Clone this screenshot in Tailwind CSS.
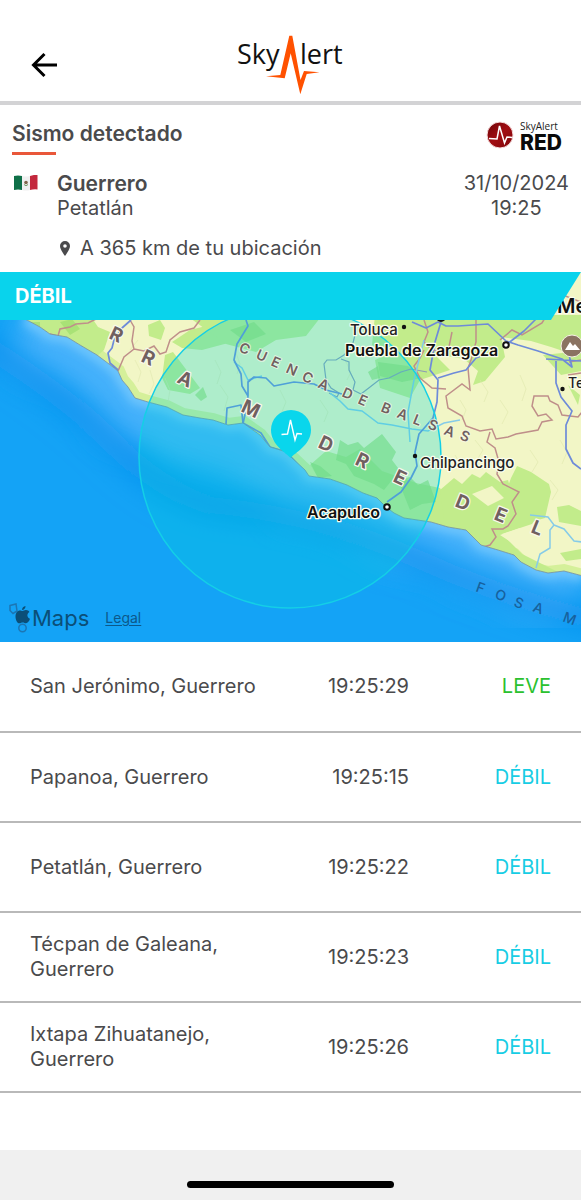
<!DOCTYPE html>
<html lang="es">
<head>
    <meta charset="UTF-8">
    <meta name="viewport" content="width=device-width, initial-scale=1.0">
    <title>SkyAlert - Sismo detectado</title>
    <script src="https://cdn.jsdelivr.net/npm/@tailwindcss/browser@4"></script>
</head>
<body class="min-h-screen flex flex-col bg-white text-[#4a4a4c] text-xl leading-[25px] font-['Inter',sans-serif]">

    <!-- Barra superior -->
    <header class="grid grid-cols-[1fr_auto_1fr] items-center h-[105px] pt-7 px-7 border-b-4 border-[#d3d3d5]">
        <button type="button" aria-label="Regresar" class="w-8 h-8 flex items-center justify-center text-black">
            <svg class="w-8 h-8" viewBox="0 0 32 32" fill="none" stroke="currentColor" stroke-width="3">
                <path d="M16.5 5 5.5 16 16.5 27M5.5 16H29"/>
            </svg>
        </button>
        <svg class="w-[110px] h-[62px]" viewBox="235 34 110 62" role="img" aria-label="SkyAlert">
            <g class="font-['Open_Sans',sans-serif] text-[27px]" fill="#111">
                <text x="236" y="64">Sky</text>
                <text x="299" y="64">lert</text>
            </g>
            <path fill="#ff5100" d="M288.300 35.700h3L299.500 80 303 71l15.500 1.300L305.700 74 299.300 94.300 289.700 53.300 283.700 78.300 265 76.300 279.300 75Z"/>
        </svg>
    </header>

    <!-- Resumen del sismo -->
    <section class="pt-4 pb-[11px] px-3">
        <div class="flex justify-between h-9">
            <div>
                <h1 class="text-[21px] font-semibold">Sismo detectado</h1>
                <div class="w-11 h-[3px] mt-[6px] bg-[#e9573a]"></div>
            </div>
            <svg class="w-[84px] h-9" viewBox="484 120 84 36" role="img" aria-label="SkyAlert RED">
                <defs>
                    <linearGradient id="redBadge" x1="0" y1="0" x2="1" y2="1">
                        <stop offset="0" stop-color="#6d0408"/>
                        <stop offset=".5" stop-color="#a10d12"/>
                        <stop offset="1" stop-color="#7d060a"/>
                    </linearGradient>
                </defs>
                <circle cx="499" cy="134" r="13" fill="url(#redBadge)" stroke="#f5dcdc"/>
                <path d="M488 137.500l8 .5 2.500-13 5 17 2.500-6 5 .5" fill="none" stroke="#fff" stroke-width="1.500"/>
                <text x="519" y="129" font-size="10" fill="#222" class="font-['Open_Sans',sans-serif]">SkyAlert</text>
                <text x="519" y="149" font-size="21" font-weight="800" fill="#0a0a0a">RED</text>
            </svg>
        </div>
        <div class="flex mt-[14px]">
            <svg class="w-6 h-4 mt-1 mr-5 ml-[2px]" viewBox="0 0 24 16" role="img" aria-label="México">
                <path d="M0 1q4-1 8 0v14q-4-1-8 0Z" fill="#0f7048"/>
                <path d="M8 1q4 1 8 0v14q-4 1-8 0Z" fill="#f0f0f0"/>
                <path d="M16 1q4-1.500 7.500-1v14.500q-3.500-.5-7.500.5Z" fill="#c3283d"/>
                <path d="M10 9.500q2 2.500 4 0" fill="none" stroke="#6f9a63"/>
                <circle cx="12" cy="7.500" r="1.800" fill="#80644a"/>
            </svg>
            <div class="flex-1 -ml-[1px]">
                <p class="text-[21px] font-semibold">Guerrero</p>
                <p>Petatlán</p>
            </div>
            <div class="text-center">
                <p>31/10/2024</p>
                <p>19:25</p>
            </div>
        </div>
        <div class="flex items-center mt-[15px] pl-12 gap-[10px]">
            <svg class="w-[10px] h-[15px]" viewBox="0 0 10 15" fill="#4a4a4c">
                <path fill-rule="evenodd" d="M5 0a5 5 0 0 0-5 5c0 3.500 5 10 5 10s5-6.500 5-10a5 5 0 0 0-5-5Zm0 3.200a1.800 1.800 0 1 1 0 3.600 1.800 1.800 0 0 1 0-3.600Z"/>
            </svg>
            <p>A 365 km de tu ubicación</p>
        </div>
    </section>

    <!-- Mapa con intensidad -->
    <section class="relative h-[370px] overflow-hidden">
        <svg class="w-full h-full" viewBox="0 272 581 370" preserveAspectRatio="xMidYMid slice">
            <defs>
                <filter id="soft" x="-20%" y="-20%" width="140%" height="140%"><feGaussianBlur stdDeviation="14"/></filter>
                <filter id="shore" x="-20%" y="-20%" width="140%" height="140%"><feGaussianBlur stdDeviation="5"/></filter>
                <path id="coast" d="M25 319 40 327 50 334 67 337 80 345 97 355 113 367 118 371 122 380 128 387 135 398 148 402 167 407 183 415 200 418 213 420 228 425 243 423 260 435 270 447 287 452 292 458 305 470 309 476 330 479 347 485 363 493 377 498 386 507 394 513 404 518 431 522 448 527 466 530 481 545 498 550 514 555 521 562 536 570 548 573 564 571 583 576"/>
                <clipPath id="land"><path d="M25 319 40 327 50 334 67 337 80 345 97 355 113 367 118 371 122 380 128 387 135 398 148 402 167 407 183 415 200 418 213 420 228 425 243 423 260 435 270 447 287 452 292 458 305 470 309 476 330 479 347 485 363 493 377 498 386 507 394 513 404 518 431 522 448 527 466 530 481 545 498 550 514 555 521 562 536 570 548 573 564 571 583 576V270H0V319Z"/></clipPath>
            </defs>

            <!-- océano -->
            <rect y="272" width="581" height="370" fill="#14a3f6"/>
            <use href="#coast" fill="none" stroke="#45b1fb" stroke-width="95" filter="url(#soft)"/>
            <path d="M-40 330Q60 390 110 440T210 505Q320 515 420 560T620 625" fill="none" stroke="#0a92ee" stroke-width="22" filter="url(#soft)"/>
            <use href="#coast" fill="none" stroke="#6fc6fd" stroke-width="12" filter="url(#shore)"/>

            <!-- tierra -->
            <g clip-path="url(#land)">
                <rect y="272" width="581" height="310" fill="#f2f6c6"/>
                <use href="#coast" fill="none" stroke="#d5f09a" stroke-width="14"/>
                <g fill="#c2ec8b">
                    <path d="M20 315h70l8 12 12 5-6 18-9 8-30-20-24-8Z"/>
                    <path d="M148 325l12-5 5 8-4 12-12-4ZM172 342l18-12 32-8 10 20-30 8-20-2ZM165 355l8-3 12 16 15 20-10 6-22-4-6-12Z"/>
                    <path d="M190 318h130l-14 18-30 4-20 12-30-8Z"/>
                    <path d="M375 315h206v42l-30-10-20-6-30-4 4 20-20 24-12 4 5-14-14-12-24-4-28 10-40-20Z"/>
                    <path d="M375 360l45-20 30 30-30 10-10 18-30-10Z"/>
                    <path d="M310 465l16-14 20 6 14-8 22 22 34 12 24 5 10 18 40 14 20 26-54-8-80-20-48-25Z"/>
                    <path d="M440 490l14-12 8 6 10-10 8 4 6-6 14 10 8-2 4 14 10 10 20 6-10 14-30 10 20 20 40 20-24 2-44-22-50-34Z"/>
                    <path d="M511 478l6-12 14 6 18 12 2 8-6 26-14 4-8-8-12 4-8-18ZM557 507l12-2 12 6v15l-22-4ZM560 553l21-4v10l-15 2ZM568 385l12 10-2 10Z"/>
                    <path d="M543 355l38-4v20l-20 4Z"/>
                </g>
                <path d="M472 494l20-8 12 12-16 8ZM500 535l20-7 24 8-8 14-22-6Z" fill="#f2f6c6"/>
                <g fill="#9bdd6c" opacity=".65">
                    <path d="M340 440l8 5 10-3 6 6 18-14 14 18-4 8 12 16-12 4-8 10-10-6-20-8-8-12-10-4ZM310 462l10 4 12 10-14 2ZM378 362l30 4 14 12-20 4-22-6ZM398 480l12-3 8 8 10-5 8 22-14 2-12 6Z"/>
                    <path d="M195 395l8-8 4 10-6 4ZM368 372l10-6 2 12-8 2ZM230 330l24-8 12 12-20 8ZM60 322l12-3 8 10-10 6ZM20 322h20v8Z"/>
                </g>
                <!-- relieve -->
                <g fill="none" stroke="#dfe7ad" stroke-width="1" opacity=".6">
                    <path d="M135 360l6 12-3 10M150 370l4 14-5 10M165 378l5 12-2 12M130 350l8-10M215 360l6 12-4 12M235 350l5 14-3 10M220 385l8 12-4 14M280 390l6 12-5 12M320 400l8 12-4 10M345 360l6 12-4 8"/>
                    <path d="M460 400l6 10-4 10M480 380l8 12-4 10M500 400l8 12-6 12M520 375l6 14-4 12M475 440l8 10-6 10M560 440l7 12-5 12M530 450l8 12-6 10M550 480l8 10-6 10M455 455l6 10"/>
                </g>
                <!-- límites estatales -->
                <g fill="none" stroke="#bf8f8a" stroke-width="1.500">
                    <path d="M50 334l8 2 2-7 10-2 6-3 12-1 8-4M130 320l4 7-2 14 2 8-10 8-6 14M134 349l10 2 10-5 6 8 6-2 4-12 10-8 14-4 6-8"/>
                    <path d="M424 320l4 12-4 10 8 8 16 2 4-20M476 320l0 22-5 18-3 8 2 22-8-6-16 12 2 12 14 8 4 10 14 5 12-2 4 10 12-2 8-3 22-4 4-8 10-2-6-6-8 2-6-10 2-10 14 0 2 5 8 4 4 10 16 2 8-10 14-2M500 340l12-10 10 5 20-12 6-10M569 362l12-2M568 375l13-2"/>
                    <path d="M490 432l-3 10 8 6 4 14-2 12 6 10 16 8-7 10 4 12-8 12-5 3-11 0 4 8-6 8-10 3"/>
                    <path d="M424 350l-4 8-6 8 6 12 12 10 14 1M559 272l-4 20 26 10"/>
                </g>
                <g fill="none" stroke="#8c9bb4" stroke-width="1.200">
                    <path d="M355 335l-3 12-8 8-8 5-9 0-3 4 2 16 5 8 8 5-2 4-8-4M341 359l8 3 0 8 6 12-2 8 8 4 18-14 10-2 12-6 10-3 16 3"/>
                </g>
                <!-- ríos y carreteras -->
                <g fill="none" stroke="#86cbe8" stroke-width="1.500">
                    <path d="M234 362l8 6 6 12 14-4M330 393l10 8 8 8 14 2 16 12 14 2 20 4 16 2 16-8 16-3M424 340l-10 40-6 32 2 30M536 568l4-14 10-6 0-18 4-5-6-8-18-2M554 525l10 4 10 12 8 1"/>
                </g>
                <g fill="none" stroke="#6e8bd9" stroke-width="1.700" stroke-linejoin="round">
                    <path d="M131 320l-9 8-8 12-2 8-4 5 2 10 8 7"/>
                    <path d="M246 320l2 6-11 18-3 16 7 14 1 12 6 10-2 14-4 18M248 396l0-14 6-5 12 1 8 8 20-4 20 2 12 6 16 4"/>
                    <path d="M226 424l1-16 14-3 2 18M243 423l18 10 9 14 17 5 5 6 14 15"/>
                    <path d="M412 322l14 6 12-6 8 4 12 0 30-2 18 17 12 4 20 6 24 8 10 8-4-16M546 359l35 2M556 361l0 22 5 14 11 14-6 14 0 24 7 14 8 6M506 345l18-14 16-16"/>
                    <path d="M441 322l-6 20-5 28 8 10-1 22-4 16-14 16-4 18 2 14-6 12-10 14-14 10M438 378l16-5 12-3 10-12 10-4"/>
                </g>
            </g>
            <use href="#coast" fill="none" stroke="#6c8ba5" stroke-width=".8"/>

            <!-- radio del sismo -->
            <circle cx="290" cy="457" r="151" fill="#00d8d8" fill-opacity=".28" stroke="#14cfe6" stroke-width="1.500"/>

            <!-- nombres de relieve -->
            <g class="font-bold" font-size="19" fill="#706060" stroke="#f8f8ec" stroke-width="2.500" paint-order="stroke" stroke-linejoin="round">
                <text rotate="25" x="108 140 176" y="338 361 382">RRA</text>
                <text rotate="25" x="240" y="411">M</text>
                <text rotate="25" x="317 354 392" y="447 464 481">DRE</text>
                <text rotate="22" x="454 493 530" y="506 519 532">DEL</text>
            </g>
            <g class="font-semibold" font-size="14" fill="#706060" stroke="#f8f8ec" stroke-width="2" stroke-opacity=".7" paint-order="stroke" stroke-linejoin="round">
                <text rotate="24" x="238 255 270 285 301 317" y="351 358 365 372 380 387">CUENCA</text>
                <text rotate="24" x="341 357" y="396 403">DE</text>
                <text rotate="22" x="380 396 412 427 443 459" y="411 417 423 428 434 439">BALSAS</text>
            </g>
            <text font-size="14" rotate="20" fill="#17619d" class="font-medium" x="475 494 513 532 562" y="591 598 606 611 621">FOSAM</text>

            <!-- ciudades -->
            <g class="font-medium" fill="#222" stroke="#fbfdee" stroke-width="2.500" paint-order="stroke" stroke-linejoin="round">
                <text x="350" y="335" font-size="15">Toluca</text>
                <text x="420" y="468" font-size="15">Chilpancingo</text>
                <text x="568" y="388" font-size="14">Te</text>
                <g font-weight="600" fill="#111">
                    <text x="345" y="356" font-size="16">Puebla de Zaragoza</text>
                    <text x="307" y="518" font-size="16">Acapulco</text>
                    <text x="557" y="313" font-size="20">Me</text>
                </g>
            </g>
            <g fill="#111">
                <circle cx="404" cy="327" r="2.200"/>
                <circle cx="415" cy="456" r="2.200"/>
                <circle cx="562.500" cy="389" r="2.200"/>
            </g>
            <g fill="#fff" stroke="#111" stroke-width="2">
                <circle cx="506" cy="345" r="2.800"/>
                <circle cx="387" cy="507" r="2.800"/>
                <circle cx="441" cy="317" r="4"/>
            </g>
            <circle cx="572" cy="346" r="11" fill="#8a7362" stroke="#f7f2e6"/>
            <path d="M565 350l5-8 3 4 2-2 5 6Z" fill="#fff"/>

            <!-- epicentro -->
            <path d="M290.500 458c-4-5-19.500-13-19.500-28a19.700 19.700 0 0 1 40 0c0 15-16.500 23-20.500 28Z" fill="#09d6ec"/>
            <path d="M281.500 434.500l6-.5 3-14 4.500 20 2-6.500 5 .5" fill="none" stroke="#fff" stroke-width="1.400"/>
        </svg>

        <div class="absolute inset-x-0 top-0 h-12 flex items-center pl-[15px] bg-[#09d3ec] text-white font-bold [clip-path:polygon(0_0,100%_0,calc(100%-30px)_100%,0_100%)]">DÉBIL</div>

        <div class="absolute left-2 bottom-2 flex items-center text-[#0b4f78]">
            <svg class="w-6 h-8" viewBox="0 0 24 32">
                <path d="M2 3.500l6-1.500 1 7-4 2.500-3-3Z" fill="none" stroke="#1c76b4" stroke-width="1.500"/>
                <circle cx="14.500" cy="26" r="3.700" fill="none" stroke="#1c76b4" stroke-width="1.500"/>
                <path fill="currentColor" d="M17.500 4c.2 2-1.500 4-3.500 4 0-2 1.500-3.700 3.500-4ZM14.500 9c1 0 2-1 3.500-.9 1.500 0 2.700.7 3.400 1.800-3 1.800-2.500 5.600.6 6.900-.8 2.200-2.200 4.500-4 4.500-1.300 0-1.800-.8-3.300-.8s-2 .8-3.300.8C9 21.300 7.500 17.500 7.500 14.500c0-3.800 2.300-6 4.400-6 1.200 0 2 .5 2.600.5Z"/>
            </svg>
            <span class="text-[22px]">Maps</span>
            <a href="#" class="ml-4 text-sm underline underline-offset-2 text-[#0c588a]">Legal</a>
        </div>
    </section>

    <!-- Reportes por ciudad -->
    <table class="w-full table-fixed">
        <tbody>
            <tr class="h-[90px] border-b-2 border-[#b9b9b9]">
                <td class="pl-[30px] w-[45%]">San Jerónimo, Guerrero</td>
                <td class="text-right">19:25:29</td>
                <td class="text-right pr-[30px] w-[172px] text-[#2bc12f]">LEVE</td>
            </tr>
            <tr class="h-[90px] border-b-2 border-[#b9b9b9]">
                <td class="pl-[30px]">Papanoa, Guerrero</td>
                <td class="text-right">19:25:15</td>
                <td class="text-right pr-[30px] text-[#17cde4]">DÉBIL</td>
            </tr>
            <tr class="h-[90px] border-b-2 border-[#b9b9b9]">
                <td class="pl-[30px]">Petatlán, Guerrero</td>
                <td class="text-right">19:25:22</td>
                <td class="text-right pr-[30px] text-[#17cde4]">DÉBIL</td>
            </tr>
            <tr class="h-[90px] border-b-2 border-[#b9b9b9]">
                <td class="pl-[30px]">Técpan de Galeana, Guerrero</td>
                <td class="text-right">19:25:23</td>
                <td class="text-right pr-[30px] text-[#17cde4]">DÉBIL</td>
            </tr>
            <tr class="h-[90px] border-b-2 border-[#b9b9b9]">
                <td class="pl-[30px]">Ixtapa Zihuatanejo, Guerrero</td>
                <td class="text-right">19:25:26</td>
                <td class="text-right pr-[30px] text-[#17cde4]">DÉBIL</td>
            </tr>
        </tbody>
    </table>

    <footer class="mt-auto h-[50px] flex justify-center items-end pb-3 bg-[#f0f0f0]">
        <div class="w-[207px] h-[7px] rounded-full bg-black"></div>
    </footer>
</body>
</html>
